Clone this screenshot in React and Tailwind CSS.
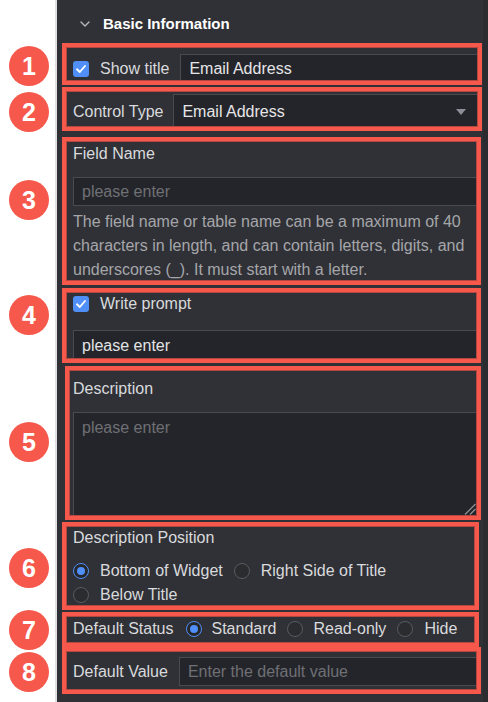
import React from 'react';

function Box({ className = '', inner = '', children }) {
  return (
    <div className={`shrink-0 border-4 border-[#f6584b] ${className}`}>
      <div className={`h-full overflow-hidden border border-[#b4473f] ${inner}`}>{children}</div>
    </div>
  );
}

function Circle({ n, className = '' }) {
  return (
    <div
      className={`flex h-[40px] w-[40px] shrink-0 items-center justify-center rounded-full bg-[#f6584b] text-[25px] font-bold leading-none text-white ${className}`}
    >
      {n}
    </div>
  );
}

function Checkbox() {
  return (
    <div className="flex h-[16px] w-[16px] shrink-0 items-center justify-center rounded-[3px] bg-[#4f8ff7]">
      <svg width="12" height="12" viewBox="0 0 12 12" fill="none">
        <path d="M2 6.3 L4.8 9 L10 3" stroke="white" strokeWidth="1.9" strokeLinecap="round" strokeLinejoin="round" />
      </svg>
    </div>
  );
}

function Radio({ on }) {
  return on ? (
    <div className="flex h-[16px] w-[16px] shrink-0 items-center justify-center rounded-full border-[1.5px] border-[#4f8ff7] bg-[#26272b]">
      <div className="h-[8px] w-[8px] rounded-full bg-[#4f8ff7]" />
    </div>
  ) : (
    <div className="h-[16px] w-[16px] shrink-0 rounded-full border border-[#5a5b60] bg-[#2b2c30]" />
  );
}

export default function App() {
  return (
    <div className="flex h-[702px] w-[488px] overflow-hidden bg-white font-['Liberation_Sans',Arial,sans-serif] text-[16px] text-[#d9dadd]">
      {/* annotation column */}
      <div className="flex w-[55px] shrink-0 flex-col pl-[9px]">
        <Circle n="1" className="mt-[46px]" />
        <Circle n="2" className="mt-[6px]" />
        <Circle n="3" className="mt-[48px]" />
        <Circle n="4" className="mt-[75px]" />
        <Circle n="5" className="mt-[87px]" />
        <Circle n="6" className="mt-[86px]" />
        <Circle n="7" className="mt-[22px]" />
        <Circle n="8" className="mt-[2px]" />
      </div>
      <div className="w-[2px] shrink-0 bg-[#e0e0e2]" />
      {/* panel */}
      <div className="flex flex-1 bg-[#303136]">
        <div className="flex flex-1 flex-col">
          {/* header */}
          <div className="flex h-[43px] shrink-0 items-center pl-[23px] pt-[5px]">
            <svg width="10" height="6" viewBox="0 0 10 6" fill="none">
              <path d="M1 1 L5 5 L9 1" stroke="#b4b6bb" strokeWidth="1.4" strokeLinecap="round" strokeLinejoin="round" />
            </svg>
            <span className="ml-[13px] text-[15px] font-bold text-white">Basic Information</span>
          </div>

          {/* 1 */}
          <Box className="ml-[5px] h-[42px] w-[420px]">
            <div className="flex items-center pl-[6px] pt-[6px]">
              <Checkbox />
              <span className="ml-[11px] whitespace-nowrap">Show title</span>
              <div className="-mr-px ml-[11px] flex h-[30px] flex-1 items-center border border-[#4a4b50] bg-[#24252a] pl-[8px] text-[#e6e6e8]">
                Email Address
              </div>
            </div>
          </Box>

          {/* 2 */}
          <Box className="ml-[5px] mt-[2px] h-[44px] w-[420px]">
            <div className="flex items-center pl-[6px] pt-[2px]">
              <span className="whitespace-nowrap">Control Type</span>
              <div className="-mr-px ml-[10px] flex h-[36px] flex-1 items-center justify-between border border-[#4a4b50] bg-[#24252a] pl-[8px] pr-[11px] text-[#e6e6e8]">
                <span>Email Address</span>
                <svg width="10" height="6" viewBox="0 0 10 6">
                  <path d="M0 0 H10 L5 6 Z" fill="#8b8e97" />
                </svg>
              </div>
            </div>
          </Box>

          {/* 3 */}
          <Box className="ml-[5px] mt-[6px] h-[148px] w-[419px]">
            <div className="flex flex-col pl-[6px] pt-[2px]">
              <span className="leading-[20px]">Field Name</span>
              <div className="-mr-px mt-[13px] flex h-[29px] items-center border border-[#4a4b50] bg-[#24252a] pl-[8px] text-[#6f7075]">
                please enter
              </div>
              <p className="mt-[4px] whitespace-nowrap leading-[24px] text-[#a5a6aa]">
                The field name or table name can be a maximum of 40
                <br />
                characters in length, and can contain letters, digits, and
                <br />
                underscores (_). It must start with a letter.
              </p>
            </div>
          </Box>

          {/* 4 */}
          <Box className="ml-[5px] mt-[3px] h-[75px] w-[419px]">
            <div className="flex flex-col pl-[6px] pt-[1px]">
              <div className="flex h-[20px] items-center">
                <Checkbox />
                <span className="ml-[11px]">Write prompt</span>
              </div>
              <div className="-mr-px mt-[16px] flex h-[32px] items-center border border-[#4a4b50] bg-[#24252a] pl-[8px] text-[#e2e3e5]">
                please enter
              </div>
            </div>
          </Box>

          {/* 5 */}
          <Box className="ml-[8px] mt-[3px] h-[154px] w-[416px]">
            <div className="flex h-full flex-col pl-[3px] pt-[8px]">
              <span className="leading-[20px]">Description</span>
              <div className="mt-[13px] flex flex-1 flex-col border-l border-t border-[#4a4b50] bg-[#24252a] pl-[8px] pt-[5px]">
                <span className="leading-[20px] text-[#6f7075]">please enter</span>
                <div className="flex-1" />
                <div className="flex justify-end">
                  <svg width="12" height="12" viewBox="0 0 12 12" fill="none">
                    <path d="M11.5 1 L1 11.5 M11.5 6 L6 11.5" stroke="#8d8e93" strokeWidth="1.3" />
                  </svg>
                </div>
              </div>
            </div>
          </Box>

          {/* 6 */}
          <Box className="ml-[5px] mt-[2px] h-[88px] w-[417px]">
            <div className="flex flex-col pl-[6px] pt-[1px]">
              <span className="leading-[20px]">Description Position</span>
              <div className="mt-[13px] flex h-[20px] items-center">
                <Radio on />
                <span className="ml-[11px]">Bottom of Widget</span>
                <span className="ml-[11px]">
                  <Radio />
                </span>
                <span className="ml-[11px]">Right Side of Title</span>
              </div>
              <div className="mt-[4px] flex h-[20px] items-center">
                <Radio />
                <span className="ml-[11px]">Below Title</span>
              </div>
            </div>
          </Box>

          {/* 7 */}
          <Box className="ml-[5px] mt-[2px] h-[35px] w-[417px]">
            <div className="flex h-[20px] items-center whitespace-nowrap pl-[6px] mt-[2px]">
              <span>Default Status</span>
              <span className="ml-[12px]">
                <Radio on />
              </span>
              <span className="ml-[10px]">Standard</span>
              <span className="ml-[11px]">
                <Radio />
              </span>
              <span className="ml-[10px]">Read-only</span>
              <span className="ml-[11px]">
                <Radio />
              </span>
              <span className="ml-[11px]">Hide</span>
            </div>
          </Box>

          {/* 8 */}
          <Box className="ml-[5px] h-[47px] w-[419px]">
            <div className="flex items-center pl-[6px] pt-[5px]">
              <span className="whitespace-nowrap">Default Value</span>
              <div className="-mr-px ml-[11px] flex h-[29px] flex-1 items-center border border-[#4a4b50] bg-[#24252a] pl-[8px] text-[#6f7075]">
                Enter the default value
              </div>
            </div>
          </Box>
        </div>
        <div className="w-[5px] shrink-0 bg-[#2b2c30]" />
      </div>
    </div>
  );
}
